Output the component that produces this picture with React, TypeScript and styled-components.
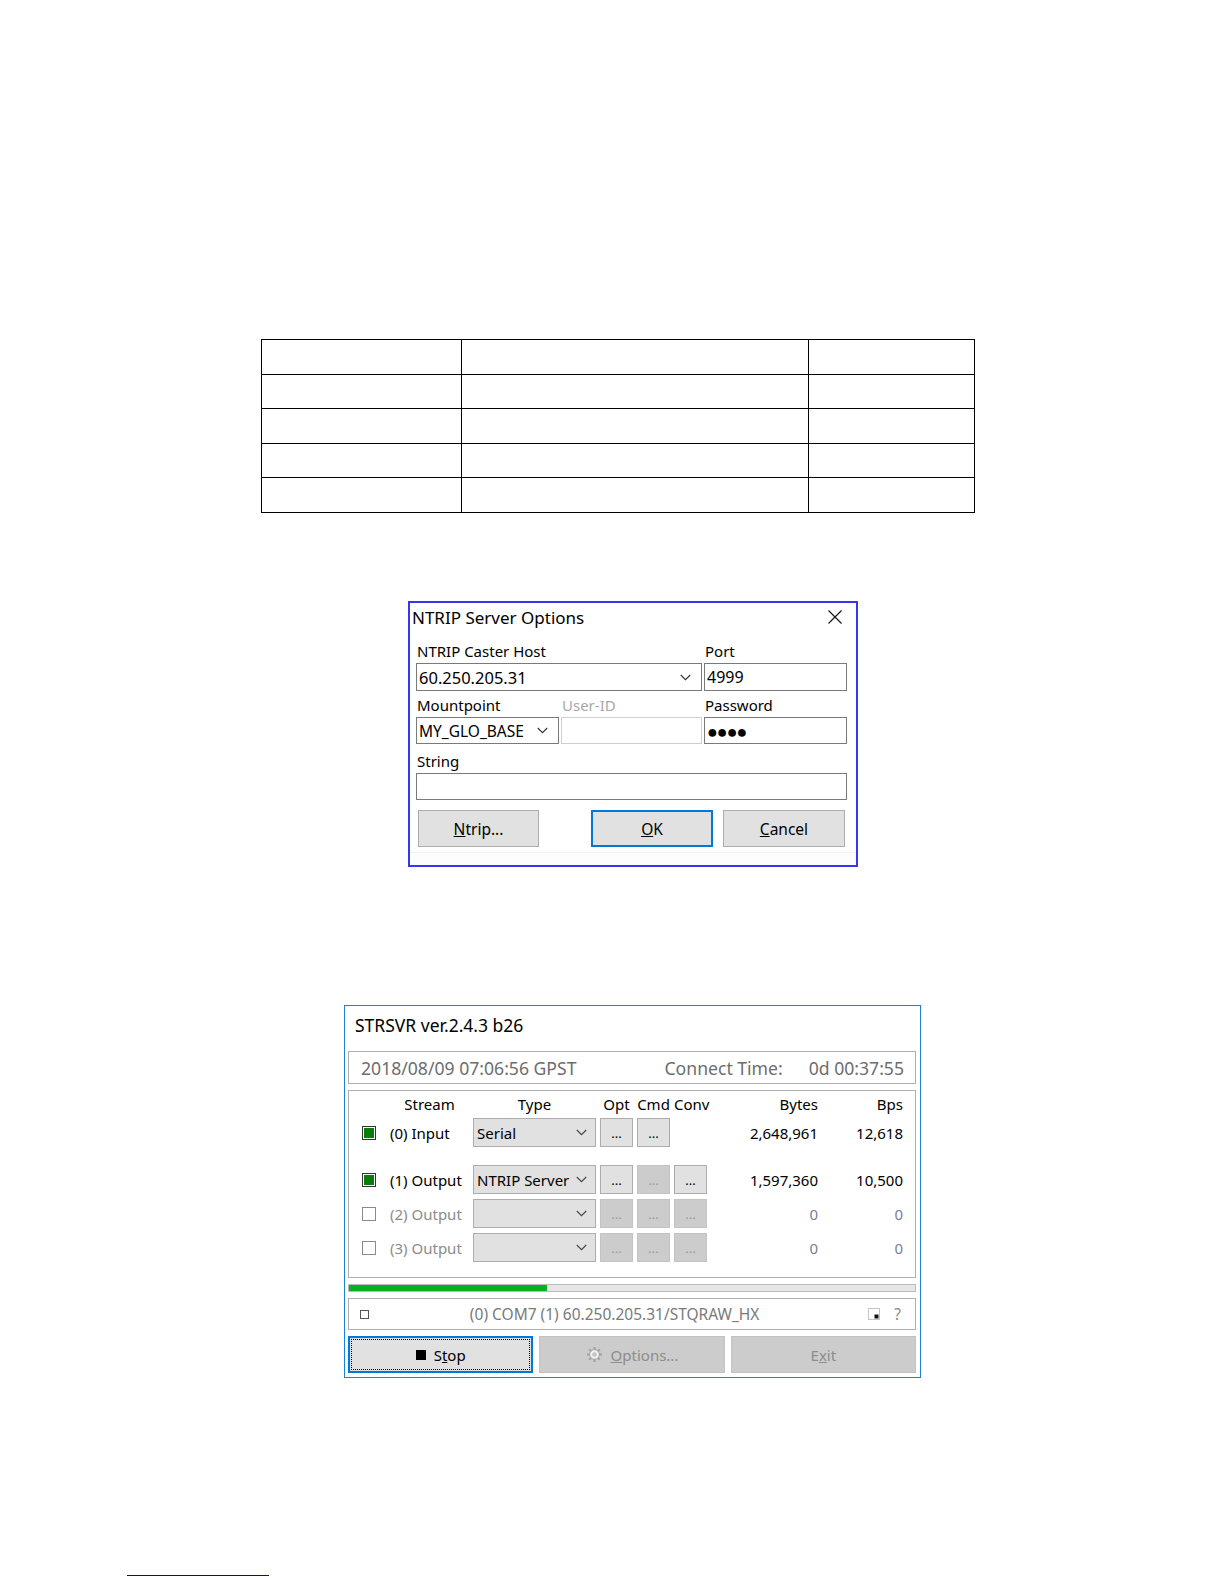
import React from "react";
import styled, { createGlobalStyle, css } from "styled-components";

const GlobalStyle = createGlobalStyle`
  html, body { margin: 0; padding: 0; background: #ffffff; }
  body { font-family: "Noto Sans", "Liberation Sans", sans-serif; color: #000; }
  * { box-sizing: border-box; }
`;

const Page = styled.div`
  width: 1225px;
  min-height: 1585px;
  padding-top: 339px;
  display: flex;
  flex-direction: column;
`;

/* ---------- empty table ---------- */
const Table = styled.table`
  margin-left: 261px;
  width: 714px;
  height: 174px;
  border-collapse: collapse;
  table-layout: fixed;
`;
const Cell = styled.td<{ $w?: number }>`
  border: 1px solid #000;
  width: ${(p) => (p.$w ? `${p.$w}px` : "auto")};
  padding: 0;
`;

/* ---------- NTRIP dialog ---------- */
const Dialog = styled.div`
  margin-top: 88px;
  margin-left: 408px;
  width: 450px;
  height: 266px;
  border: 2px solid #3636f2;
  background: #fff;
  display: flex;
  flex-direction: column;
`;
const DialogTitleBar = styled.div`
  height: 28px;
  display: flex;
  align-items: center;
  justify-content: space-between;
  padding: 0 13px 0 2px;
`;
const DialogTitle = styled.span`
  font-size: 17px;
  color: #000;
`;
const DialogBody = styled.div`
  margin-top: 9px;
  padding: 0 9px 0 6px;
  display: grid;
  grid-template-columns: 143px 141px 143px;
  column-gap: 2px;
  grid-template-rows: 23px 28px 26px 27px 29px 27px;
`;
const FieldLabel = styled.div<{ $span?: number; $muted?: boolean }>`
  grid-column: span ${(p) => p.$span ?? 1};
  display: flex;
  align-items: flex-end;
  padding: 0 0 2px 1px;
  font-size: 15px;
  line-height: 19px;
  color: ${(p) => (p.$muted ? "#a8a8a8" : "#000")};
`;
const Field = styled.div<{ $span?: number; $muted?: boolean; $size?: number }>`
  grid-column: span ${(p) => p.$span ?? 1};
  border: 1px solid ${(p) => (p.$muted ? "#cfcfcf" : "#7a7a7a")};
  background: #fff;
  display: flex;
  align-items: center;
  justify-content: space-between;
  padding: 0 10px 0 2px;
  font-size: ${(p) => p.$size ?? 15}px;
  white-space: nowrap;
  overflow: hidden;
`;
const Dots = styled.span`
  font-size: 18px;
  letter-spacing: -1px;
  line-height: 1;
`;
const DialogButtons = styled.div`
  margin-top: 10px;
  padding: 0 11px 0 8px;
  display: flex;
  height: 37px;
  gap: 10px;
`;
const WinButton = styled.button<{ $w: number; $focus?: boolean; $push?: boolean }>`
  width: ${(p) => p.$w}px;
  height: 37px;
  margin-left: ${(p) => (p.$push ? "auto" : "0")};
  background: #e1e1e1;
  border: ${(p) => (p.$focus ? "2px solid #0078d7" : "1px solid #adadad")};
  font-family: "Noto Sans", "Liberation Sans", sans-serif;
  font-size: 15.5px;
  color: #000;
  padding: 0;
`;
const DialogFooter = styled.div`
  margin-top: 5px;
  flex: 1;
  border-top: 1px solid #f2f2f2;
  background: #fdfdfd;
`;

const Chevron = ({ color = "#333" }: { color?: string }) => (
  <svg width="11" height="7" viewBox="0 0 11 7">
    <polyline points="0.8,1 5.5,5.7 10.2,1" fill="none" stroke={color} strokeWidth="1.1" />
  </svg>
);

const CloseIcon = () => (
  <svg width="16" height="16" viewBox="0 0 16 16">
    <line x1="1.5" y1="1.5" x2="14.5" y2="14.5" stroke="#1a1a1a" strokeWidth="1.3" />
    <line x1="14.5" y1="1.5" x2="1.5" y2="14.5" stroke="#1a1a1a" strokeWidth="1.3" />
  </svg>
);

/* ---------- STRSVR window ---------- */
const Window = styled.div`
  margin-top: 138px;
  margin-left: 344px;
  width: 577px;
  height: 373px;
  border: 1px solid #1883d7;
  background: #fff;
  display: flex;
  flex-direction: column;
`;
const WinTitleBar = styled.div`
  height: 40px;
  display: flex;
  align-items: center;
  padding-left: 10px;
  padding-bottom: 2px;
  font-size: 17.5px;
`;
const WinContent = styled.div`
  padding: 5px 4px 4px 3px;
  display: flex;
  flex-direction: column;
  gap: 6px;
`;
const Panel = styled.div<{ $h: number }>`
  height: ${(p) => p.$h}px;
  border: 1px solid #adadad;
  background: #fff;
`;
const TimePanel = styled(Panel)`
  display: flex;
  align-items: center;
  padding: 0 11px 0 12px;
  font-size: 17.6px;
  color: #6d6d6d;
  white-space: nowrap;
`;
const TimeSpacer = styled.span`
  flex: 1;
`;
const ConnectLabel = styled.span`
  margin-right: 26px;
`;
const StreamPanel = styled(Panel)`
  padding: 1px 12px 0 13px;
  display: flex;
  flex-direction: column;
  gap: 4px;
`;
const StreamGrid = styled.div<{ $h: number; $mt?: number }>`
  display: grid;
  grid-template-columns: 24px 79px 123px 33px 33px 33px 107px 81px;
  column-gap: 4px;
  height: ${(p) => p.$h}px;
  margin-top: ${(p) => p.$mt ?? 0}px;
  align-items: center;
  font-size: 15px;
  white-space: nowrap;
`;
const HeadCell = styled.span<{ $align?: string }>`
  text-align: ${(p) => p.$align ?? "center"};
  align-self: end;
  line-height: 20px;
`;
const CheckBox = styled.span<{ $on: boolean }>`
  width: 14px;
  height: 14px;
  border: 1px solid ${(p) => (p.$on ? "#333" : "#8a8a8a")};
  background: #fff;
  display: flex;
  padding: 1px;
  &::after {
    content: "";
    flex: 1;
    background: ${(p) => (p.$on ? "#0a7c0a" : "transparent")};
  }
`;
const RowLabel = styled.span<{ $dim?: boolean }>`
  color: ${(p) => (p.$dim ? "#8c8c8c" : "#000")};
`;
const Combo = styled.div`
  height: 29px;
  border: 1px solid #adadad;
  background: #e1e1e1;
  display: flex;
  align-items: center;
  justify-content: space-between;
  padding: 0 8px 0 3px;
  font-size: 15px;
`;
const DotButton = styled.div<{ $off?: boolean }>`
  height: 29px;
  border: 1px solid ${(p) => (p.$off ? "#c3c3c3" : "#adadad")};
  background: ${(p) => (p.$off ? "#cccccc" : "#e1e1e1")};
  color: ${(p) => (p.$off ? "#9a9a9a" : "#000")};
  display: flex;
  align-items: center;
  justify-content: center;
  font-size: 13px;
  line-height: 1;
  padding-top: 2px;
`;
const Num = styled.span<{ $dim?: boolean }>`
  text-align: right;
  color: ${(p) => (p.$dim ? "#7c7c94" : "#000")};
`;
const Progress = styled.div`
  height: 8px;
  border: 1px solid #bcbcbc;
  background: #e6e6e6;
  display: flex;
`;
const ProgressFill = styled.div`
  background: #06b025;
  height: 100%;
`;
const StatusPanel = styled(Panel)`
  display: flex;
  align-items: center;
  padding: 0 14px 0 11px;
  font-size: 15.5px;
  color: #7a7a7a;
`;
const MiniBox = styled.span`
  width: 9px;
  height: 9px;
  border: 1px solid #555;
  background: #fff;
`;
const StatusText = styled.span`
  flex: 1;
  text-align: center;
  padding-right: 8px;
  white-space: nowrap;
`;
const StatusIcons = styled.span`
  display: flex;
  align-items: center;
  gap: 14px;
  color: #8a8a8a;
`;
const BottomButtons = styled.div`
  display: grid;
  grid-template-columns: repeat(3, 1fr);
  column-gap: 6px;
  height: 37px;
`;
const BigButton = styled.div<{ $off?: boolean; $focus?: boolean }>`
  position: relative;
  display: flex;
  align-items: center;
  justify-content: center;
  gap: 8px;
  font-size: 15px;
  background: ${(p) => (p.$off ? "#cccccc" : "#e1e1e1")};
  color: ${(p) => (p.$off ? "#8d8d8d" : "#000")};
  border: ${(p) => (p.$focus ? "2px solid #0078d7" : "1px solid #c3c3c3")};
  ${(p) =>
    p.$focus &&
    css`
      &::before {
        content: "";
        position: absolute;
        inset: 1px;
        border: 1px dotted #000;
      }
    `}
`;
const StopSquare = styled.span`
  width: 10px;
  height: 10px;
  background: #000;
`;

const Footnote = styled.div`
  margin-top: 197px;
  margin-left: 127px;
  width: 142px;
  height: 1px;
  background: #0000c8;
`;

const GearIcon = () => (
  <svg width="17" height="17" viewBox="0 0 17 17">
    {[0, 45, 90, 135, 180, 225, 270, 315].map((a) => {
      const r = (a * Math.PI) / 180;
      return (
        <line
          key={a}
          x1={8.5 + Math.cos(r) * 4}
          y1={8.5 + Math.sin(r) * 4}
          x2={8.5 + Math.cos(r) * 7.5}
          y2={8.5 + Math.sin(r) * 7.5}
          stroke="#a3a3a3"
          strokeWidth="2.2"
        />
      );
    })}
    <circle cx="8.5" cy="8.5" r="4.8" fill="#f2f2f2" stroke="#a3a3a3" strokeWidth="1" />
    <circle cx="8.5" cy="8.5" r="1.8" fill="#cccccc" stroke="#b0b0b0" strokeWidth="0.8" />
  </svg>
);

const CornerIcon = () => (
  <svg width="12" height="12" viewBox="0 0 12 12">
    <rect x="0.5" y="0.5" width="11" height="11" fill="none" stroke="#888" strokeWidth="1" strokeDasharray="1 1" />
    <rect x="6.5" y="6.5" width="4" height="4" fill="#111" />
  </svg>
);

type Row = {
  label: string;
  on: boolean;
  type: string;
  btns: (boolean | null)[];
  bytes: string;
  bps: string;
  dim: boolean;
  mt?: number;
};

const rows: Row[] = [
  { label: "(0) Input", on: true, type: "Serial", btns: [true, true, null], bytes: "2,648,961", bps: "12,618", dim: false },
  { label: "(1) Output", on: true, type: "NTRIP Server", btns: [true, false, true], bytes: "1,597,360", bps: "10,500", dim: false, mt: 14 },
  { label: "(2) Output", on: false, type: "", btns: [false, false, false], bytes: "0", bps: "0", dim: true, mt: 1 },
  { label: "(3) Output", on: false, type: "", btns: [false, false, false], bytes: "0", bps: "0", dim: true, mt: 1 },
];

export default function App() {
  return (
    <Page>
      <GlobalStyle />
      <Table>
        <tbody>
          {[0, 1, 2, 3, 4].map((i) => (
            <tr key={i}>
              <Cell $w={200} />
              <Cell $w={347} />
              <Cell />
            </tr>
          ))}
        </tbody>
      </Table>

      <Dialog>
        <DialogTitleBar>
          <DialogTitle>NTRIP Server Options</DialogTitle>
          <CloseIcon />
        </DialogTitleBar>
        <DialogBody>
          <FieldLabel $span={2}>NTRIP Caster Host</FieldLabel>
          <FieldLabel>Port</FieldLabel>
          <Field $span={2} $size={16.5}>
            <span>60.250.205.31</span>
            <Chevron />
          </Field>
          <Field $size={16}>4999</Field>
          <FieldLabel>Mountpoint</FieldLabel>
          <FieldLabel $muted>User-ID</FieldLabel>
          <FieldLabel>Password</FieldLabel>
          <Field $size={15.5}>
            <span>MY_GLO_BASE</span>
            <Chevron />
          </Field>
          <Field $muted />
          <Field>
            <Dots>●●●●</Dots>
          </Field>
          <FieldLabel $span={3}>String</FieldLabel>
          <Field $span={3} />
        </DialogBody>
        <DialogButtons>
          <WinButton $w={121}>
            <u>N</u>trip...
          </WinButton>
          <WinButton $w={122} $focus $push>
            <u>O</u>K
          </WinButton>
          <WinButton $w={122}>
            <u>C</u>ancel
          </WinButton>
        </DialogButtons>
        <DialogFooter />
      </Dialog>

      <Window>
        <WinTitleBar>STRSVR ver.2.4.3 b26</WinTitleBar>
        <WinContent>
          <TimePanel $h={33}>
            <span>2018/08/09 07:06:56 GPST</span>
            <TimeSpacer />
            <ConnectLabel>Connect Time:</ConnectLabel>
            <span>0d 00:37:55</span>
          </TimePanel>

          <StreamPanel $h={188}>
            <StreamGrid $h={22}>
              <span />
              <HeadCell>Stream</HeadCell>
              <HeadCell>Type</HeadCell>
              <HeadCell>Opt</HeadCell>
              <HeadCell>Cmd</HeadCell>
              <HeadCell>Conv</HeadCell>
              <HeadCell $align="right">Bytes</HeadCell>
              <HeadCell $align="right">Bps</HeadCell>
            </StreamGrid>
            {rows.map((r) => (
              <StreamGrid key={r.label} $h={29} $mt={r.mt}>
                <CheckBox $on={r.on} />
                <RowLabel $dim={r.dim}>{r.label}</RowLabel>
                <Combo>
                  <span>{r.type}</span>
                  <Chevron color="#444" />
                </Combo>
                {r.btns.map((b, i) =>
                  b === null ? <span key={i} /> : <DotButton key={i} $off={!b}>...</DotButton>
                )}
                <Num $dim={r.dim}>{r.bytes}</Num>
                <Num $dim={r.dim}>{r.bps}</Num>
              </StreamGrid>
            ))}
          </StreamPanel>

          <Progress>
            <ProgressFill style={{ width: "35%" }} />
          </Progress>

          <StatusPanel $h={32}>
            <MiniBox />
            <StatusText>(0) COM7 (1) 60.250.205.31/STQRAW_HX</StatusText>
            <StatusIcons>
              <CornerIcon />
              <span>?</span>
            </StatusIcons>
          </StatusPanel>

          <BottomButtons>
            <BigButton $focus>
              <StopSquare />
              <span>
                S<u>t</u>op
              </span>
            </BigButton>
            <BigButton $off>
              <GearIcon />
              <span>
                <u>O</u>ptions...
              </span>
            </BigButton>
            <BigButton $off>
              <span>
                E<u>x</u>it
              </span>
            </BigButton>
          </BottomButtons>
        </WinContent>
      </Window>

      <Footnote />
    </Page>
  );
}
